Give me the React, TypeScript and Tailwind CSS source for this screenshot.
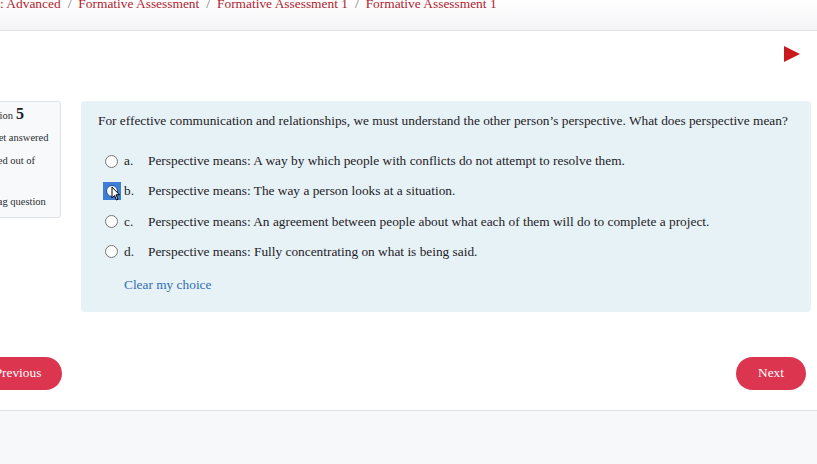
import React from 'react'

const options = [
  { letter: 'a.', text: 'Perspective means: A way by which people with conflicts do not attempt to resolve them.' },
  { letter: 'b.', text: 'Perspective means: The way a person looks at a situation.', checked: true },
  { letter: 'c.', text: 'Perspective means: An agreement between people about what each of them will do to complete a project.' },
  { letter: 'd.', text: 'Perspective means: Fully concentrating on what is being said.' },
]

function Radio({ checked }: { checked?: boolean }) {
  if (checked) {
    return (
      <span className="relative flex h-[18px] w-[18px] shrink-0 items-center justify-center bg-[#3d7fd6]">
        <span className="h-[12px] w-[12px] rounded-full border-[1.5px] border-[#1f4f8f] bg-white" />
        <svg className="absolute left-[8px] top-[4px]" width="10" height="15" viewBox="0 0 10 15">
          <path d="M1 1 L1 12 L3.5 9.5 L5.5 14 L7 13.3 L5 8.8 L8.5 8.8 Z" fill="#fff" stroke="#000" strokeWidth="1" />
        </svg>
      </span>
    )
  }
  return <span className="h-[13px] w-[13px] shrink-0 rounded-full border border-[#767676] bg-white" />
}

export default function App() {
  return (
    <div className="flex h-[464px] w-[817px] flex-col overflow-hidden bg-white font-['Liberation_Serif',serif] text-[#1d2125]">
      <header className="h-[31px] shrink-0 border-b border-[#dee2e6] bg-gradient-to-b from-white to-[#f4f4f7]">
        <div className="-mt-[6px] flex items-center gap-[7px] whitespace-nowrap text-[13.4px] text-[#b01c2e]">
          <span>: Advanced</span>
          <span className="text-[#6a737b]">/</span>
          <span>Formative Assessment</span>
          <span className="text-[#6a737b]">/</span>
          <span>Formative Assessment 1</span>
          <span className="text-[#6a737b]">/</span>
          <span>Formative Assessment 1</span>
        </div>
      </header>

      <main className="flex h-[380px] shrink-0 flex-col border-b border-[#dee2e6]">
        <div className="flex justify-end pr-[17px] pt-[15px]">
          <svg width="16" height="16" viewBox="0 0 16 16">
            <path d="M0 0 L16 8 L0 16 Z" fill="#c8191f" />
          </svg>
        </div>

        <div className="mt-[39px] flex items-start gap-[20px]">
          <div className="-ml-[34px] h-[117px] w-[95px] shrink-0 rounded-[3px] border border-[#dee2e6] bg-[#f8f9fa] px-[8px] pt-[4px] text-[10.5px] leading-none whitespace-nowrap text-[#2b2f33]">
            <div className="flex items-baseline gap-[3px]">
              <span>Question</span>
              <span className="text-[16px] font-bold text-[#1d2125]">5</span>
            </div>
            <div className="mt-[11px]">Not yet answered</div>
            <div className="mt-[12px]">Marked out of</div>
            <div className="mt-[6px]">1.00</div>
            <div className="mt-[14px] flex items-center gap-[3px]">
              <svg width="11" height="11" viewBox="0 0 12 12">
                <path d="M2 1 V11 M2 1.5 H10 L8 4 L10 6.5 H2" fill="none" stroke="#555" strokeWidth="1.2" />
              </svg>
              <span>Flag question</span>
            </div>
          </div>

          <div className="h-[211px] w-[730px] shrink-0 rounded-[4px] bg-[#e7f2f7] pl-[17px] pt-[10px] text-[13.35px]">
            <p className="whitespace-nowrap">
              For effective communication and relationships, we must understand the other person’s perspective. What does perspective mean?
            </p>
            <div className="mt-[21px] flex flex-col gap-[12.3px] pl-[7px]">
              {options.map((o) => (
                <div key={o.letter} className="flex h-[18px] items-center whitespace-nowrap">
                  <span className="mr-[6px] flex w-[13px] items-center justify-center">
                    <Radio checked={o.checked} />
                  </span>
                  <span className="w-[24px]">{o.letter}</span>
                  <span>{o.text}</span>
                </div>
              ))}
            </div>
            <div className="mt-[14px] pl-[26px] text-[#2f6eb5]">Clear my choice</div>
          </div>
        </div>

        <div className="mt-[45px] flex justify-between">
          <button className="-ml-[30px] h-[33px] w-[92px] rounded-full bg-[#dc3550] pl-[4px] text-[13.35px] text-white">
            Previous
          </button>
          <button className="mr-[11px] h-[33px] w-[70px] rounded-full bg-[#dc3550] text-[13.35px] text-white">
            Next
          </button>
        </div>
      </main>

      <footer className="flex-1 bg-[#f7f8fa]" />
    </div>
  )
}
